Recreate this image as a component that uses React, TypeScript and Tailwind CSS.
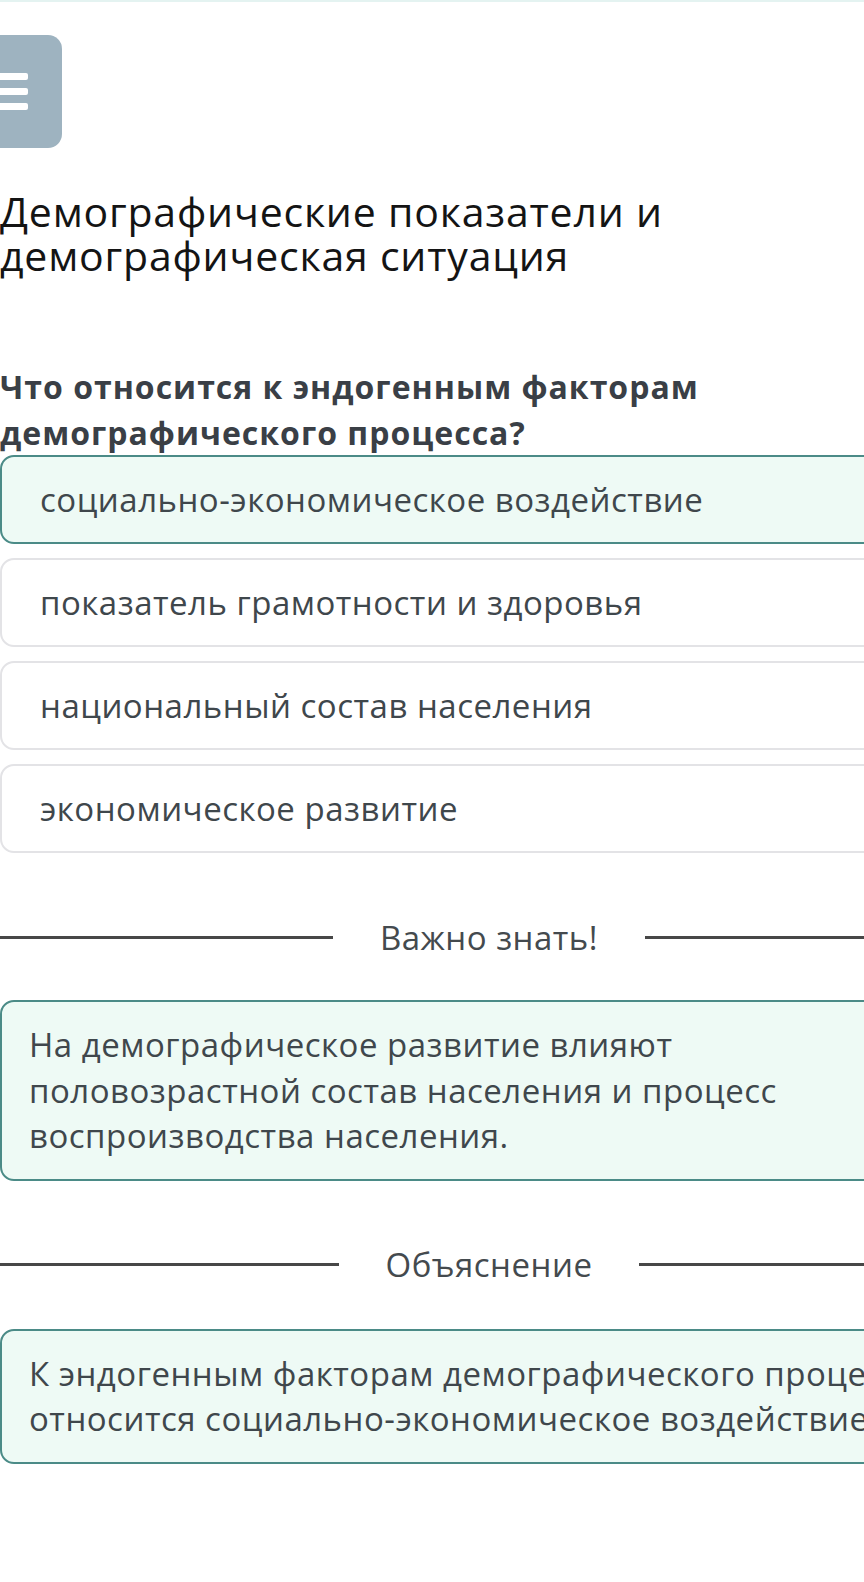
import React from "react";

const font = { fontFamily: '"Open Sans", "Noto Sans", sans-serif' };

function Divider({ label }: { label: string }) {
  return (
    <div className="flex items-center w-full">
      <div className="flex-1 h-[3px] bg-[#474747]" />
      <div className="px-[47px] text-[33px] tracking-[0.5px] leading-[45px] text-[#444a4e]">{label}</div>
      <div className="flex-1 h-[3px] bg-[#474747]" />
    </div>
  );
}

function Option({ text, selected }: { text: string; selected?: boolean }) {
  return (
    <div
      className={
        selected
          ? "rounded-[14px] border-2 border-[#4b8b87] bg-[#eefaf5] pl-[38px] py-[20px] text-[33px] tracking-[0.5px] leading-[45px] text-[#3f474c] whitespace-nowrap"
          : "rounded-[14px] border-2 border-[#e3e3e6] bg-white pl-[38px] py-[20px] text-[33px] tracking-[0.5px] leading-[45px] text-[#3f474c] whitespace-nowrap"
      }
    >
      {text}
    </div>
  );
}

function InfoBox({ children }: { children: React.ReactNode }) {
  return (
    <div className="rounded-[14px] border-2 border-[#4b8b87] bg-[#eefaf5] pl-[27px] pr-[20px] py-[20px] text-[33px] tracking-[0.5px] leading-[45.5px] text-[#3f474c] whitespace-nowrap">
      {children}
    </div>
  );
}

export default function App() {
  return (
    <div className="w-[864px] min-h-[1582px] overflow-hidden bg-white" style={font}>
      <div className="h-[2px] bg-[#e4f3f1]" />
      <div className="w-[978px] pt-[33px]">
        <div className="ml-[-51px] w-[113px] h-[113px] rounded-[14px] bg-[#9eb3c0] flex flex-col items-center justify-center gap-[8px]">
          <div className="w-[44px] h-[7px] rounded-[2px] bg-white" />
          <div className="w-[44px] h-[7px] rounded-[2px] bg-white" />
          <div className="w-[44px] h-[7px] rounded-[2px] bg-white" />
        </div>

        <h1 className="mt-[41px] text-[41px] tracking-[0.8px] leading-[44px] text-[#141414] font-normal whitespace-nowrap">
          Демографические показатели и
          <br />
          демографическая ситуация
        </h1>

        <h2 className="mt-[87px] text-[32px] tracking-[1px] leading-[46px] font-bold text-[#3a3f46] whitespace-nowrap">
          Что относится к эндогенным факторам
          <br />
          демографического процесса?
        </h2>

        <div className="mt-[-1px] flex flex-col gap-[14px]">
          <Option text="социально-экономическое воздействие" selected />
          <Option text="показатель грамотности и здоровья" />
          <Option text="национальный состав населения" />
          <Option text="экономическое развитие" />
        </div>

        <div className="mt-[62px]">
          <Divider label="Важно знать!" />
        </div>

        <div className="mt-[40px]">
          <InfoBox>
            На демографическое развитие влияют
            <br />
            половозрастной состав населения и процесс
            <br />
            воспроизводства населения.
          </InfoBox>
        </div>

        <div className="mt-[61px]">
          <Divider label="Объяснение" />
        </div>

        <div className="mt-[42px]">
          <InfoBox>
            К эндогенным факторам демографического процесса
            <br />
            относится социально-экономическое воздействие.
          </InfoBox>
        </div>
      </div>
    </div>
  );
}
